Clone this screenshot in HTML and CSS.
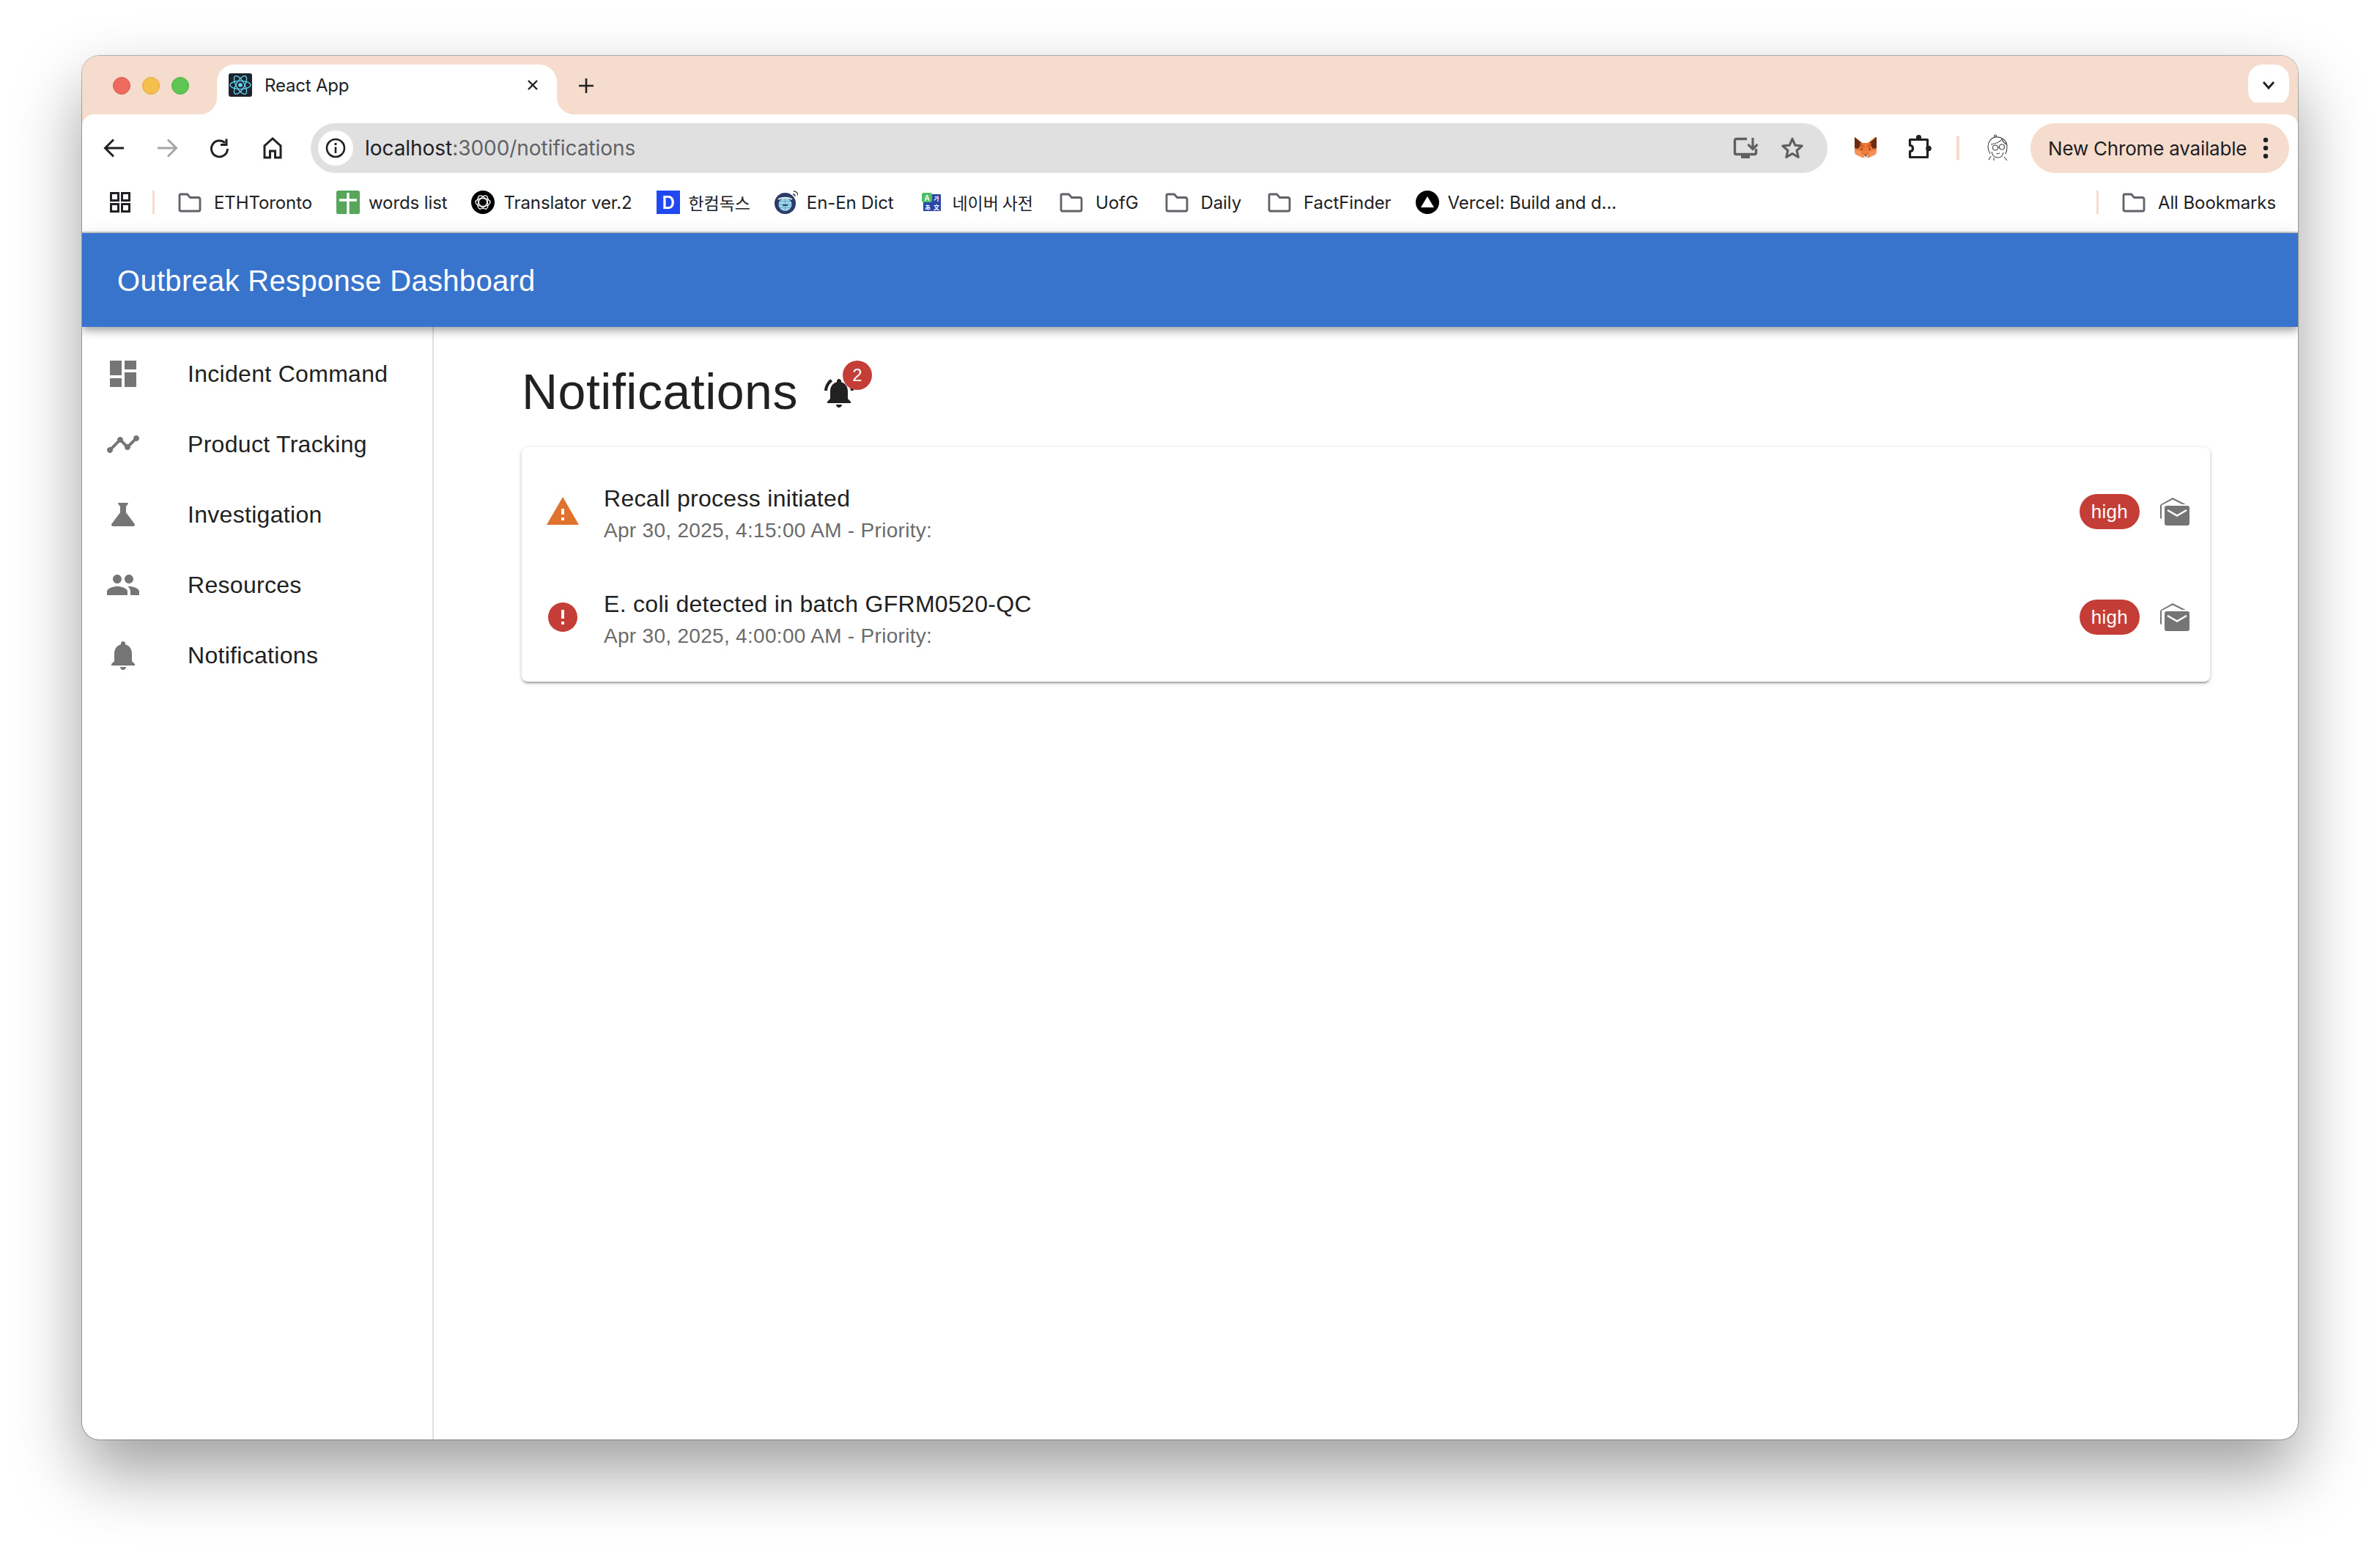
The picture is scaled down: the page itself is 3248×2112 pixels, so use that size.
FILE: index.html
```html
<!DOCTYPE html>
<html lang="en">
<head>
  <meta charset="UTF-8" />
  <title>React App</title>
  <link rel="stylesheet" href="styles.css">
</head>
<body>
  <div class="window">
    <!-- browser chrome -->
    <div class="tabstrip">
      <div class="lights">
        <span class="light red"></span>
        <span class="light yellow"></span>
        <span class="light green"></span>
      </div>
      <div class="tab">
        <svg class="fav" viewBox="0 0 32 32">
          <rect width="32" height="32" rx="3" fill="#20232a"/>
          <g fill="none" stroke="#61dafb" stroke-width="1.3">
            <ellipse cx="16" cy="16" rx="14" ry="5.6"/>
            <ellipse cx="16" cy="16" rx="14" ry="5.6" transform="rotate(60 16 16)"/>
            <ellipse cx="16" cy="16" rx="14" ry="5.6" transform="rotate(120 16 16)"/>
          </g>
          <circle cx="16" cy="16" r="2.8" fill="#61dafb"/>
        </svg>
        <span class="tab-title">React App</span>
        <svg class="tab-close" viewBox="0 0 20 20"><path d="M4 4l12 12M16 4 4 16" stroke="#202124" stroke-width="2.4" fill="none"/></svg>
      </div>
      <svg class="newtab" viewBox="0 0 24 24"><path d="M12 2v20M2 12h20" stroke="#202124" stroke-width="2.6" fill="none"/></svg>
      <div class="tabmenu">
        <svg viewBox="0 0 20 20"><path d="M3 6l7 8 7-8" stroke="#202124" stroke-width="2.8" fill="none"/></svg>
      </div>
    </div>

    <div class="toolbar">
      <svg class="nav-btn" viewBox="0 0 40 40"><path d="M33 20H8M19 8.500 7.500 20 19 31.500" stroke="#202124" stroke-width="3" fill="none"/></svg>
      <svg class="nav-btn" viewBox="0 0 40 40"><path d="M7 20h25M21 8.500 32.500 20 21 31.500" stroke="#a4a5a7" stroke-width="3" fill="none"/></svg>
      <svg class="nav-btn" viewBox="0 0 40 40"><path d="M30.500 21a11 11 0 1 1-3.600-8.200M29 7.500v8h-8" stroke="#202124" stroke-width="3" fill="none"/></svg>
      <svg class="nav-btn" viewBox="0 0 40 40"><path d="M20 7 9 17v16h7.500V24h7v9H31V17z" stroke="#202124" stroke-width="3" fill="none"/></svg>

      <div class="omnibox">
        <span class="info">
          <svg viewBox="0 0 30 30"><circle cx="15" cy="15" r="12" stroke="#202124" stroke-width="2.600" fill="none"/><path d="M15 13.500V22" stroke="#202124" stroke-width="2.600"/><circle cx="15" cy="9.500" r="1.700" fill="#202124"/></svg>
        </span>
        <span class="url">localhost<span class="url-rest">:3000/notifications</span></span>
        <svg class="omni-icon" viewBox="0 0 36 36"><path d="M20 5.500H5.500a2 2 0 0 0-2 2v17a2 2 0 0 0 2 2h25a2 2 0 0 0 2-2V19" stroke="#606060" stroke-width="3.400" fill="none"/><path d="M12 26h12v6H12z" fill="#606060"/><path d="M28 4v14M21.500 13l6.500 6.500 6.500-6.500" stroke="#606060" stroke-width="3.200" fill="none"/></svg>
        <svg class="omni-icon star" viewBox="0 0 32 32"><path d="M16 3.500l3.800 8.700 9.400.9-7.100 6.200 2.100 9.200L16 23.600l-8.200 4.900 2.100-9.200-7.100-6.200 9.400-.9z" stroke="#606060" stroke-width="3.200" fill="none" stroke-linejoin="round"/></svg>
      </div>

      <svg class="ext fox" viewBox="0 0 36 36">
        <path d="M4 5l10 8h8l10-8 2 0v21l-10 7H14L4 26z" fill="#ee7a3a"/>
        <path d="M4 5l10 8-5 8-5-1zM34 5 24 13l5 8 5-1z" fill="#6a2c10"/>
        <path d="M4 22l9 3 2 8-10-4zM34 22l-9 3-2 8 10-4z" fill="#f4945f"/>
        <path d="M11 13l3 0 4 6-5 1zM27 13l-3 0-4 6 5 1z" fill="#d9602a"/>
        <circle cx="13.500" cy="21.500" r="1" fill="#3a2010"/><circle cx="24.500" cy="21.500" r="1" fill="#3a2010"/>
        <path d="M15 30h8l-4 4z" fill="#e8e4de"/><path d="M17 29.500h4l-2 2z" fill="#333"/>
      </svg>
      <svg class="ext puzzle" viewBox="0 0 36 36"><path d="M5.500 8.500h24v24h-24v-8c3 0 4-2 4-4s-1-4-4-4z" stroke="#202124" stroke-width="3.200" fill="none" stroke-linejoin="round"/><circle cx="17.500" cy="5.500" r="3.600" fill="#202124"/><circle cx="31" cy="20.500" r="3.800" fill="#202124"/></svg>
      <span class="tool-sep"></span>
      <svg class="ext avatar" viewBox="0 0 36 40">
        <g fill="none" stroke="#444" stroke-width="1.100">
          <circle cx="14" cy="3.500" r="1.500"/>
          <path d="M14 5c8-1 16 4 16 13 0 5-1 8-2 10M14 5C8 6 4 12 4 18c0 4 1 7 3 10"/>
          <path d="M8 15c6-1 12-3 15-7 1 3 3 5 6 7"/>
          <circle cx="14" cy="19.500" r="3.500"/><circle cx="23" cy="18.500" r="3.500"/>
          <path d="M17.500 19h2M9 25c1 6 5 8 9 8 4 0 6-2 7-7M8 31l-3 5M26 32l4 5M15.500 28l4.500-1M12 33v4"/>
        </g>
      </svg>
      <div class="update-pill">
        <span>New Chrome available</span>
        <svg viewBox="0 0 8 32"><circle cx="4" cy="5" r="3.200" fill="#202124"/><circle cx="4" cy="16" r="3.200" fill="#202124"/><circle cx="4" cy="27" r="3.200" fill="#202124"/></svg>
      </div>
    </div>

    <div class="bookmarks">
      <svg class="apps" viewBox="0 0 32 32"><g fill="none" stroke="#202124" stroke-width="3"><rect x="3.500" y="3.500" width="10" height="10"/><rect x="18.500" y="3.500" width="10" height="10"/><rect x="3.500" y="18.500" width="10" height="10"/><rect x="18.500" y="18.500" width="10" height="10"/></g></svg>
      <span class="bm-sep"></span>
      <div class="bm-list">
        <div class="bm folder-bm"><svg class="bm-icon" viewBox="0 0 32 32"><path d="M2 6.500A1.500 1.500 0 0 1 3.500 5h9l4 4.500h11A2.500 2.500 0 0 1 30 12v14a2 2 0 0 1-2 2H4a2 2 0 0 1-2-2z" fill="none" stroke="#5f6368" stroke-width="2.800"/></svg><span>ETHToronto</span></div>
        <div class="bm"><svg class="bm-icon" viewBox="0 0 32 32"><rect width="32" height="32" rx="2.500" fill="#58a55c"/><path d="M16 3v29M4 13h24" stroke="#fff" stroke-width="3.500"/></svg><span>words list</span></div>
        <div class="bm"><svg class="bm-icon" viewBox="0 0 32 32"><circle cx="16" cy="16" r="16" fill="#000"/><g fill="none" stroke="#fff" stroke-width="1.300"><ellipse cx="16" cy="16" rx="10" ry="5.500"/><ellipse cx="16" cy="16" rx="10" ry="5.500" transform="rotate(60 16 16)"/><ellipse cx="16" cy="16" rx="10" ry="5.500" transform="rotate(120 16 16)"/></g></svg><span>Translator ver.2</span></div>
        <div class="bm"><svg class="bm-icon" viewBox="0 0 32 32"><rect width="32" height="32" fill="#1f48f0"/><text class="icon-letter" x="16" y="25" font-size="24" text-anchor="middle" fill="#fff">D</text></svg><span class="ko">한컴독스</span></div>
        <div class="bm"><svg class="bm-icon" viewBox="0 0 32 32"><circle cx="14.500" cy="17.500" r="14.500" fill="#2b3a67"/><circle cx="14.500" cy="19" r="9" fill="#9bd3ea"/><path d="M5.500 19h18M14.500 10v18M7 14.500h15M7 23.500h15" stroke="#5ba6c8" stroke-width=".8" fill="none"/><path d="M5 12c5-3 14-3 19 0" stroke="#e8eef2" stroke-width="2" fill="none"/><path d="M11 20h7" stroke="#223" stroke-width="1.600"/><path d="M25 5c2 0 3 1 3 3M26 1c3 0 6 2 6 6" fill="none" stroke="#333" stroke-width="1.300"/></svg><span>En-En Dict</span></div>
        <div class="bm naver"><svg class="bm-icon small" viewBox="0 0 26 32"><rect x="2" y="5" width="24" height="23" rx="1" fill="#2a46a8"/><rect y="3" width="14" height="13" rx="2" fill="#4fbf67"/><g class="icon-letter" fill="#fff" text-anchor="middle"><text x="7" y="13.500" font-size="10">A</text><text x="20" y="14" font-size="8">가</text><text x="8" y="25.500" font-size="8">あ</text><text x="20" y="25.500" font-size="8">文</text></g></svg><span class="ko">네이버 사전</span></div>
        <div class="bm folder-bm"><svg class="bm-icon" viewBox="0 0 32 32"><path d="M2 6.500A1.500 1.500 0 0 1 3.500 5h9l4 4.500h11A2.500 2.500 0 0 1 30 12v14a2 2 0 0 1-2 2H4a2 2 0 0 1-2-2z" fill="none" stroke="#5f6368" stroke-width="2.800"/></svg><span>UofG</span></div>
        <div class="bm folder-bm"><svg class="bm-icon" viewBox="0 0 32 32"><path d="M2 6.500A1.500 1.500 0 0 1 3.500 5h9l4 4.500h11A2.500 2.500 0 0 1 30 12v14a2 2 0 0 1-2 2H4a2 2 0 0 1-2-2z" fill="none" stroke="#5f6368" stroke-width="2.800"/></svg><span>Daily</span></div>
        <div class="bm folder-bm"><svg class="bm-icon" viewBox="0 0 32 32"><path d="M2 6.500A1.500 1.500 0 0 1 3.500 5h9l4 4.500h11A2.500 2.500 0 0 1 30 12v14a2 2 0 0 1-2 2H4a2 2 0 0 1-2-2z" fill="none" stroke="#5f6368" stroke-width="2.800"/></svg><span>FactFinder</span></div>
        <div class="bm"><svg class="bm-icon" viewBox="0 0 32 32"><circle cx="16" cy="16" r="16" fill="#000"/><path d="M16 8l9 15H7z" fill="#fff"/></svg><span>Vercel: Build and d...</span></div>
      </div>
      <div class="bm-end">
        <span class="bm-sep"></span>
        <div class="bm folder-bm"><svg class="bm-icon" viewBox="0 0 32 32"><path d="M2 6.500A1.500 1.500 0 0 1 3.500 5h9l4 4.500h11A2.500 2.500 0 0 1 30 12v14a2 2 0 0 1-2 2H4a2 2 0 0 1-2-2z" fill="none" stroke="#5f6368" stroke-width="2.800"/></svg><span>All Bookmarks</span></div>
      </div>
    </div>

    <!-- the app -->
    <header class="appbar">Outbreak Response Dashboard</header>

    <div class="layout">
      <nav class="sidebar">
        <a class="nav-item"><span class="nav-icon"><svg viewBox="0 0 24 24"><path d="M3 13h8V3H3v10zm0 8h8v-6H3v6zm10 0h8V11h-8v10zm0-18v6h8V3h-8z"/></svg></span>Incident Command</a>
        <a class="nav-item"><span class="nav-icon"><svg viewBox="0 0 24 24"><path d="M23 8c0 1.100-.9 2-2 2-.18 0-.35-.02-.51-.07l-3.560 3.550c.05.16.07.34.07.52 0 1.100-.9 2-2 2s-2-.9-2-2c0-.18.02-.36.07-.52l-2.550-2.550c-.16.05-.34.07-.52.07s-.36-.02-.52-.07l-4.550 4.560c.05.16.07.33.07.51 0 1.100-.9 2-2 2s-2-.9-2-2 .9-2 2-2c.18 0 .35.02.51.07l4.560-4.550C8.020 9.360 8 9.180 8 9c0-1.100.9-2 2-2s2 .9 2 2c0 .18-.02.36-.07.52l2.550 2.550c.16-.05.34-.07.52-.07s.36.02.52.07l3.550-3.560C19.020 8.350 19 8.180 19 8c0-1.100.9-2 2-2s2 .9 2 2z"/></svg></span>Product Tracking</a>
        <a class="nav-item"><span class="nav-icon"><svg viewBox="0 0 24 24"><path d="M19.800 18.400 14 10.670V6.500l1.350-1.690c.26-.33.03-.81-.39-.81H9.040c-.42 0-.65.48-.39.81L10 6.500v4.170L4.200 18.400c-.49.66-.02 1.600.8 1.600h14c.82 0 1.290-.94.8-1.600z"/></svg></span>Investigation</a>
        <a class="nav-item"><span class="nav-icon"><svg viewBox="0 0 24 24"><path d="M16 11c1.660 0 2.990-1.340 2.990-3S17.660 5 16 5c-1.660 0-3 1.340-3 3s1.340 3 3 3zm-8 0c1.660 0 2.990-1.340 2.990-3S9.660 5 8 5C6.340 5 5 6.340 5 8s1.340 3 3 3zm0 2c-2.330 0-7 1.170-7 3.500V19h14v-2.500c0-2.330-4.670-3.500-7-3.500zm8 0c-.29 0-.62.02-.97.05 1.160.84 1.970 1.970 1.970 3.450V19h6v-2.500c0-2.330-4.670-3.500-7-3.500z"/></svg></span>Resources</a>
        <a class="nav-item"><span class="nav-icon"><svg viewBox="0 0 24 24"><path d="M12 22c1.100 0 2-.9 2-2h-4c0 1.100.89 2 2 2zm6-6v-5c0-3.070-1.640-5.640-4.500-6.320V4c0-.83-.67-1.500-1.500-1.500s-1.500.67-1.500 1.500v.68C7.630 5.360 6 7.920 6 11v5l-2 2v1h16v-1l-2-2z"/></svg></span>Notifications</a>
      </nav>

      <main class="main">
        <div class="page-title">
          <h1>Notifications</h1>
          <span class="bell">
            <svg viewBox="0 0 24 24"><path d="M7.580 4.080 6.150 2.650C3.750 4.480 2.170 7.300 2.030 10.500h2c.15-2.650 1.510-4.970 3.550-6.420zm12.390 6.420h2c-.15-3.200-1.730-6.020-4.120-7.850l-1.420 1.430c2.020 1.450 3.390 3.770 3.540 6.420zM18 11c0-3.070-1.640-5.640-4.500-6.320V4c0-.83-.67-1.500-1.500-1.500s-1.500.67-1.500 1.500v.68C7.630 5.360 6 7.920 6 11v5l-2 2v1h16v-1l-2-2v-5zm-6 11c.14 0 .27-.01.4-.04.65-.14 1.180-.58 1.440-1.180.1-.24.15-.5.15-.78h-4c.01 1.100.9 2 2.010 2z"/></svg>
            <span class="badge">2</span>
          </span>
        </div>

        <div class="card">
          <div class="row">
            <svg class="row-icon warn" viewBox="0 0 24 24"><path d="M1 21h22L12 2 1 21zm12-3h-2v-2h2v2zm0-4h-2v-4h2v4z"/></svg>
            <div class="row-text">
              <div class="primary">Recall process initiated</div>
              <div class="secondary">Apr 30, 2025, 4:15:00 AM - Priority:</div>
            </div>
            <span class="chip">high</span>
            <svg class="mail" viewBox="0 0 24 24"><path d="M17 7h2.400L10.500 2.500 3 6.700c-.6.3-1 .9-1 1.600V16c0 .6.4 1 1 1V7.600l7.500-3.900z"/><rect x="5" y="8" width="17" height="13.500" rx="1.500"/><path d="M7 11l6.500 3.800L20 11" fill="none" stroke="#fff" stroke-width="1.200"/></svg>
          </div>
          <div class="row">
            <svg class="row-icon err" viewBox="0 0 24 24"><path d="M12 2C6.480 2 2 6.480 2 12s4.480 10 10 10 10-4.480 10-10S17.520 2 12 2zm1 15h-2v-2h2v2zm0-4h-2V7h2v6z"/></svg>
            <div class="row-text">
              <div class="primary">E. coli detected in batch GFRM0520-QC</div>
              <div class="secondary">Apr 30, 2025, 4:00:00 AM - Priority:</div>
            </div>
            <span class="chip">high</span>
            <svg class="mail" viewBox="0 0 24 24"><path d="M17 7h2.400L10.500 2.500 3 6.700c-.6.3-1 .9-1 1.600V16c0 .6.4 1 1 1V7.600l7.500-3.900z"/><rect x="5" y="8" width="17" height="13.500" rx="1.500"/><path d="M7 11l6.500 3.800L20 11" fill="none" stroke="#fff" stroke-width="1.200"/></svg>
          </div>
        </div>
      </main>
    </div>
  </div>
</body>
</html>
```

FILE: styles.css
```css
* {
  box-sizing: border-box;
}
html, body {
  margin: 0;
  height: 2112px;
  overflow: hidden;
  background-color: #fff;
}
body {
  padding: 76px 112px 148px;
  font-family: "Liberation Sans", Arial, sans-serif;
  color: #212121;
}
svg {
  display: block;
  flex-shrink: 0;
}

.window {
  height: 1888px;
  display: flex;
  flex-direction: column;
  background-color: #fff;
  border-radius: 24px;
  overflow: hidden;
  box-shadow: 0 0 0 1px rgba(0, 0, 0, 0.28), 0 44px 92px rgba(0, 0, 0, 0.38);
}

/* browser chrome */
.tabstrip {
  height: 80px;
  flex-shrink: 0;
  display: flex;
  align-items: flex-start;
  padding-top: 12px;
  background-color: #f6dccc;
  font-family: Inter, "Noto Sans", sans-serif;
}
.lights {
  width: 184px;
  height: 58px;
  padding-left: 42px;
  display: flex;
  align-items: center;
  gap: 16px;
}
.light {
  width: 24px;
  height: 24px;
  border-radius: 50%;
}
.red {
  background-color: #ee6a5f;
  border: 1px solid #d9584e;
}
.yellow {
  background-color: #f6c04f;
  border: 1px solid #dea63c;
}
.green {
  background-color: #5fc553;
  border: 1px solid #4fb044;
}
.tab {
  position: relative;
  width: 464px;
  height: 68px;
  display: flex;
  align-items: center;
  padding: 0 23px 12px 16px;
  background-color: #fff;
  border-radius: 24px 24px 0 0;
}
.tab::before, .tab::after {
  content: "";
  position: absolute;
  bottom: 0;
  width: 24px;
  height: 24px;
}
.tab::before {
  left: -24px;
  background: radial-gradient(circle at 0 0, transparent 24px, #fff 24.500px);
}
.tab::after {
  right: -24px;
  background: radial-gradient(circle at 100% 0, transparent 24px, #fff 24.500px);
}
.fav {
  width: 32px;
  height: 32px;
}
.tab-title {
  margin-left: 17px;
  font-size: 24px;
  letter-spacing: -0.2px;
  color: #202124;
}
.tab-close {
  width: 20px;
  height: 20px;
  margin-left: auto;
}
.newtab {
  width: 24px;
  height: 24px;
  margin: 17px 0 0 28px;
}
.tabmenu {
  width: 56px;
  height: 56px;
  margin: 0 12px 0 auto;
  display: flex;
  align-items: center;
  justify-content: center;
  background-color: #fff;
  border-radius: 20px;
}
.tabmenu svg {
  width: 20px;
  height: 20px;
}

.toolbar {
  height: 92px;
  flex-shrink: 0;
  display: flex;
  align-items: flex-start;
  gap: 32px;
  padding: 12px 12px 0 24px;
  background-color: #fff;
  border-radius: 16px 16px 0 0;
  box-shadow: 0 -16px 0 #f6dccc;
  font-family: Inter, "Noto Sans", sans-serif;
}
.nav-btn {
  width: 40px;
  height: 40px;
  margin-top: 14px;
}
.omnibox {
  flex: 1;
  height: 68px;
  display: flex;
  align-items: center;
  padding: 0 32px 0 10px;
  background-color: #e0e0e0;
  border-radius: 34px;
}
.info {
  width: 48px;
  height: 48px;
  display: flex;
  align-items: center;
  justify-content: center;
  background-color: #fff;
  border-radius: 50%;
}
.info svg {
  width: 30px;
  height: 30px;
}
.url {
  margin-left: 16px;
  font-size: 28px;
  letter-spacing: -0.05px;
  color: #202124;
}
.url-rest {
  color: #5f6368;
}
.omni-icon {
  width: 36px;
  height: 36px;
  margin-left: auto;
}
.omni-icon.star {
  width: 32px;
  height: 32px;
  margin-left: 30px;
}
.ext {
  width: 36px;
  height: 36px;
  margin-top: 14px;
}
.fox {
  margin-left: 1px;
}
.puzzle {
  margin-left: 6px;
}
.tool-sep {
  width: 4px;
  height: 32px;
  margin: 18px 0 0 1px;
  background-color: #f6dccc;
}
.avatar {
  height: 40px;
  margin-left: 3px;
}
.update-pill {
  width: 353px;
  height: 68px;
  margin-left: -6px;
  display: flex;
  align-items: center;
  justify-content: space-between;
  padding: 0 28px 0 24px;
  background-color: #f6dccc;
  border-radius: 34px;
  font-size: 26px;
  letter-spacing: -0.2px;
  color: #202124;
}
.update-pill svg {
  width: 8px;
  height: 32px;
}

.bookmarks {
  height: 70px;
  flex-shrink: 0;
  display: flex;
  align-items: flex-start;
  padding: 12px 30px 0 36px;
  background-color: #fff;
  border-bottom: 2px solid #ccc;
  font-family: Inter, "Noto Sans CJK KR", sans-serif;
  font-size: 24px;
  letter-spacing: -0.1px;
  color: #202124;
}
.apps {
  width: 32px;
  height: 32px;
}
.bm-sep {
  width: 3px;
  height: 32px;
  margin-left: 28px;
  background-color: #f6dccc;
}
.bm-list {
  display: flex;
  gap: 33px;
  margin-left: 29px;
}
.bm {
  height: 32px;
  display: flex;
  align-items: center;
  gap: 12px;
  white-space: nowrap;
}
.folder-bm {
  gap: 17px;
  margin-left: 3px;
}
.naver {
  gap: 16px;
  margin-left: 5px;
}
.bm-icon {
  width: 32px;
  height: 32px;
}
.bm-icon.small {
  width: 26px;
}
.icon-letter {
  font-family: Inter, "Noto Sans CJK KR", sans-serif;
  font-weight: 600;
}
.ko {
  font-family: "Noto Sans CJK KR", sans-serif;
  font-size: 23px;
}
.bm-end {
  display: flex;
  margin-left: auto;
  gap: 29px;
}

/* the app */
.appbar {
  position: relative;
  z-index: 1;
  height: 128px;
  flex-shrink: 0;
  display: flex;
  align-items: center;
  padding: 2px 0 0 48px;
  background-color: #3874cb;
  color: #fff;
  font-size: 40px;
  letter-spacing: 0.3px;
  box-shadow: 0 4px 8px -2px rgba(0, 0, 0, 0.2), 0 8px 10px rgba(0, 0, 0, 0.14), 0 2px 20px rgba(0, 0, 0, 0.12);
}
.layout {
  flex: 1;
  display: flex;
  min-height: 0;
}
.sidebar {
  width: 480px;
  flex-shrink: 0;
  padding-top: 16px;
  border-right: 2px solid #e0e0e0;
}
.nav-item {
  height: 96px;
  display: flex;
  align-items: center;
  padding-left: 32px;
  font-size: 32px;
  letter-spacing: 0.3px;
}
.nav-icon {
  width: 112px;
  flex-shrink: 0;
}
.nav-icon svg {
  width: 48px;
  height: 48px;
  fill: #757575;
}
.main {
  flex: 1;
  padding: 46px 120px 0;
}
.page-title {
  display: flex;
  align-items: center;
  margin-bottom: 34px;
}
h1 {
  margin: 0;
  font-size: 68px;
  font-weight: 400;
  line-height: 84px;
  letter-spacing: 0.5px;
}
.bell {
  position: relative;
  width: 48px;
  height: 48px;
  margin: 4px 0 0 32px;
}
.bell svg {
  width: 48px;
  height: 48px;
  fill: #212121;
}
.badge {
  position: absolute;
  top: -20px;
  left: 29px;
  width: 40px;
  height: 40px;
  display: flex;
  align-items: center;
  justify-content: center;
  background-color: #c43e37;
  border-radius: 50%;
  color: #fff;
  font-size: 24px;
}
.card {
  padding: 16px 0;
  background-color: #fff;
  border-radius: 8px;
  box-shadow: 0 4px 2px -2px rgba(0, 0, 0, 0.2), 0 2px 4px rgba(0, 0, 0, 0.14), 0 2px 6px rgba(0, 0, 0, 0.12);
}
.row {
  height: 144px;
  display: flex;
  align-items: center;
  padding: 0 24px 0 32px;
}
.row-icon {
  width: 48px;
  height: 48px;
}
.warn {
  fill: #e0722d;
}
.err {
  fill: #c43e37;
}
.row-text {
  flex: 1;
  margin-left: 32px;
  padding-top: 4px;
}
.primary {
  font-size: 32px;
  line-height: 48px;
  letter-spacing: 0.3px;
}
.secondary {
  font-size: 28px;
  line-height: 40px;
  letter-spacing: 0.3px;
  color: #6b6b6b;
}
.chip {
  height: 48px;
  display: flex;
  align-items: center;
  padding: 0 16px;
  background-color: #c43e37;
  border-radius: 24px;
  color: #fff;
  font-size: 26px;
  letter-spacing: 0.3px;
}
.mail {
  width: 48px;
  height: 48px;
  margin-left: 24px;
  fill: #757575;
}
```
